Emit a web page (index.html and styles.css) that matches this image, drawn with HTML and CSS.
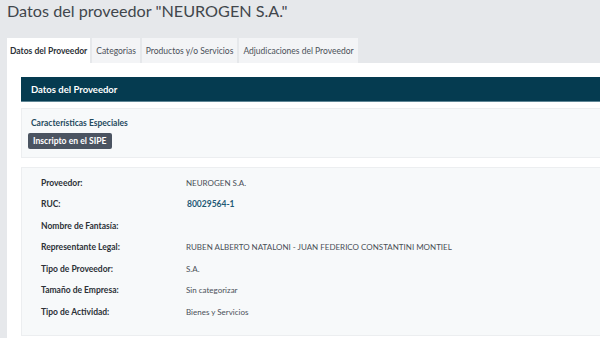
FILE: index.html
```html
<!DOCTYPE html>
<html lang="es">
<head>
<meta charset="utf-8">
<title>Datos del proveedor</title>
<link rel="stylesheet" href="styles.css">
</head>
<body>
<div class="page">
  <h1 class="title">Datos del proveedor "NEUROGEN S.A."</h1>
  <ul class="tabs">
    <li class="tab active">Datos del Proveedor</li>
    <li class="tab">Categorias</li>
    <li class="tab">Productos y/o Servicios</li>
    <li class="tab">Adjudicaciones del Proveedor</li>
  </ul>
  <div class="content">
    <div class="section-head">Datos del Proveedor</div>
    <div class="panel special">
      <div class="special-title">Características Especiales</div>
      <span class="badge">Inscripto en el SIPE</span>
    </div>
    <div class="panel details">
      <div class="row"><div class="label">Proveedor:</div><div class="value">NEUROGEN S.A.</div></div>
      <div class="row"><div class="label">RUC:</div><div class="value link">80029564-1</div></div>
      <div class="row"><div class="label">Nombre de Fantasía:</div><div class="value"></div></div>
      <div class="row"><div class="label">Representante Legal:</div><div class="value">RUBEN ALBERTO NATALONI - JUAN FEDERICO CONSTANTINI MONTIEL</div></div>
      <div class="row"><div class="label">Tipo de Proveedor:</div><div class="value">S.A.</div></div>
      <div class="row"><div class="label">Tamaño de Empresa:</div><div class="value">Sin categorizar</div></div>
      <div class="row"><div class="label">Tipo de Actividad:</div><div class="value">Bienes y Servicios</div></div>
    </div>
  </div>
</div>
</body>
</html>
```

FILE: styles.css
```css
html, body {
  margin: 0;
  padding: 0;
}
body {
  background: #e6e8eb;
  font-family: Lato, "Open Sans", sans-serif;
  color: #333;
}
.page {
  padding: 0 0 0 7px;
}
.title {
  margin: 0;
  padding-top: 1px;
  font-weight: 400;
  font-size: 16.2px;
  line-height: 19px;
  color: #41464c;
}
.tabs {
  list-style: none;
  margin: 18px 0 0 0;
  padding: 0;
  display: flex;
  gap: 2px;
  height: 25px;
}
.tab {
  background: #f3f4f6;
  font-size: 8.5px;
  color: #4a5058;
  padding: 0 4px;
  display: flex;
  align-items: center;
  height: 25px;
}
.tab.active {
  background: #fff;
  font-weight: 700;
  color: #2c3137;
  padding: 0 3px 0 3px;
}
.content {
  background: #fff;
  padding: 14px 0 2px 14px;
}
.section-head {
  background: #053b50;
  color: #fff;
  font-weight: 700;
  font-size: 9.5px;
  height: 25px;
  display: flex;
  align-items: center;
  padding-left: 10px;
  border-bottom: 1px solid #5e8594;
  box-sizing: border-box;
}
.panel {
  background: #f7f9fa;
  border: 1px solid #eceef0;
  border-right: none;
}
.special {
  margin-top: 6px;
  height: 50px;
  box-sizing: border-box;
  padding: 9px 0 0 6px;
}
.special-title {
  font-size: 8.5px;
  font-weight: 700;
  color: #1f4a5e;
  padding-left: 3px;
  line-height: 10px;
}
.badge {
  display: inline-block;
  margin-top: 2px;
  background: #4b5461;
  color: #fff;
  font-weight: 700;
  font-size: 8.6px;
  line-height: 16px;
  padding: 0 5px;
  border-radius: 2px;
}
.details {
  margin-top: 9px;
  padding: 4px 0 0 19px;
  height: 169px;
  box-sizing: border-box;
}
.row {
  display: flex;
  height: 21.5px;
  align-items: center;
  font-size: 8.5px;
}
.label {
  width: 145px;
  font-weight: 700;
  color: #2c3137;
}
.value {
  color: #4a5058;
  font-size: 8px;
}
.value.link {
  color: #1f5a75;
  font-weight: 700;
  font-size: 8.5px;
  padding-left: 1px;
}
```
